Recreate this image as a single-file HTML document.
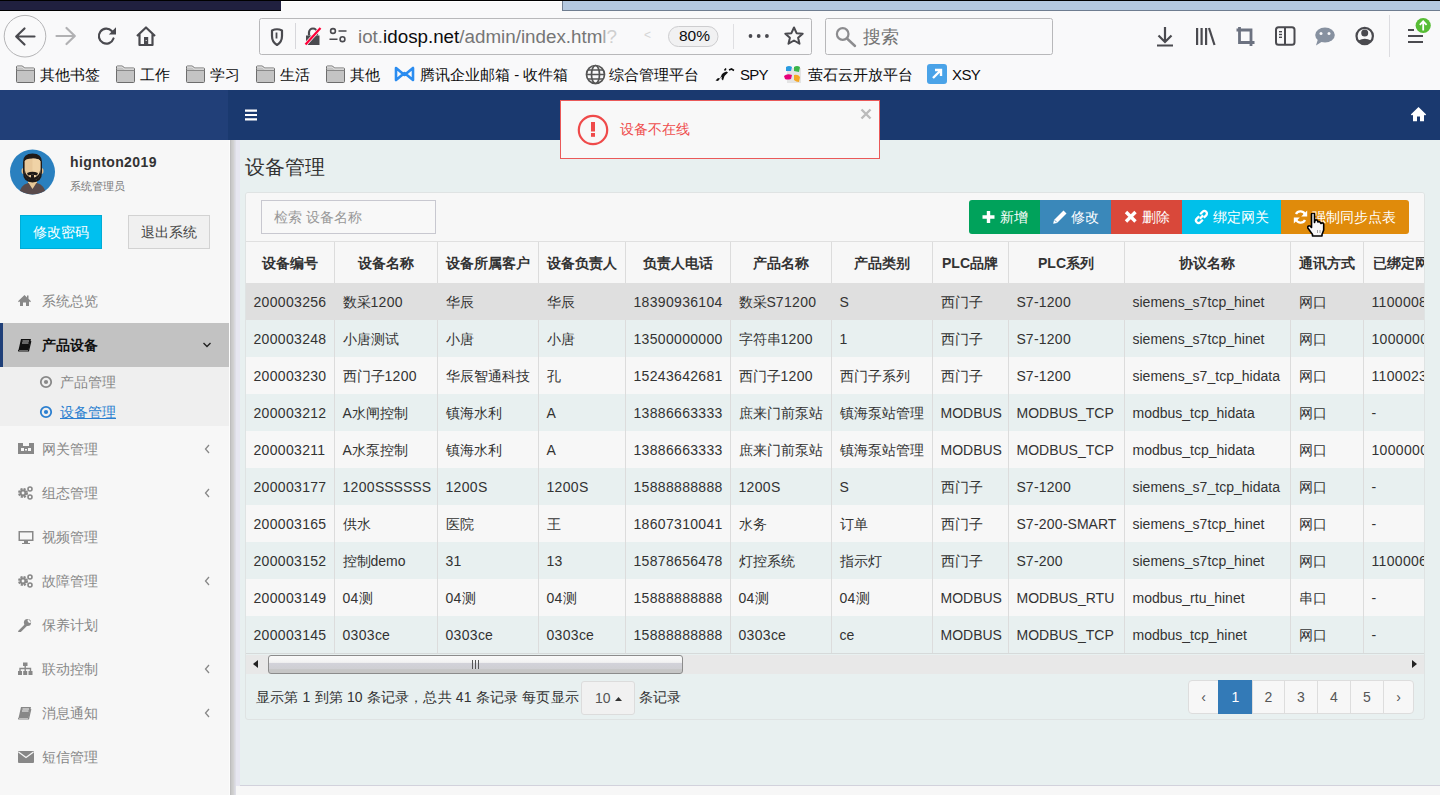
<!DOCTYPE html>
<html><head><meta charset="utf-8">
<style>
*{box-sizing:border-box;margin:0;padding:0}
html,body{width:1440px;height:795px;overflow:hidden;background:#f9f9fa;font-family:"Liberation Sans",sans-serif;color:#333}
.abs{position:absolute}
#strip{position:absolute;left:0;top:0;width:1440px;height:11px;background:#000}
#strip .a{position:absolute;left:0;top:1px;width:281px;height:9px;background:#20203f}
#strip .b{position:absolute;left:281px;top:1px;width:281px;height:10px;background:#f9f9fa;border-top:1px solid #fff}
#strip .c{position:absolute;left:562px;top:1px;width:878px;height:10px;background:#b3c8e0;border-bottom:1px solid #6f7d90;border-left:1px solid #6f7d90}
#toolbar{position:absolute;left:0;top:11px;width:1440px;height:49px;background:#f9f9fa}
#bm{position:absolute;left:0;top:60px;width:1440px;height:30px;background:#f9f9fa;font-size:15px;color:#0c0c0d}
#bm .it{position:absolute;top:0;height:30px;line-height:29px;white-space:nowrap}
#bm svg{position:absolute}
#header{position:absolute;left:0;top:90px;width:1440px;height:50px;background:#1a396f}
#header .logo{position:absolute;left:0;top:0;width:228px;height:50px;background:#213f78}
#sidebar{position:absolute;left:0;top:140px;width:230px;height:655px;background:#f7f7f7}
#sbborder{position:absolute;left:229px;top:140px;width:11px;height:655px;background:linear-gradient(to right,#fcfcfc 0,#fcfcfc 1px,#bdbdbd 1px,#bdbdbd 2px,#c8c8c8 2px,#c8c8c8 3px,#cdcdcd 3px,#cdcdcd 4px,#d2d2d2 4px,#d2d2d2 5px,#d8d8de 5px,#d8d8de 6px,#dedee6 6px,#dedee6 7px,#e6e6f0 7px)}
#content{position:absolute;left:240px;top:140px;width:1200px;height:645px;background:#e8f0f0}
#bottomline{position:absolute;left:240px;top:785px;width:1200px;height:10px;background:#f7f7f7;border-top:1px solid #d2d2dc}
.th{height:41px;line-height:41px;font-size:14px;font-weight:bold;color:#333;text-align:center;white-space:nowrap}
.td{height:37px;line-height:37px;font-size:14px;color:#333;white-space:nowrap}
.ls{letter-spacing:0.32px}
</style></head><body>
<div id="strip"><div class="a"></div><div class="b"></div><div class="c"></div></div>
<div id="toolbar"><svg width="1440" height="49" viewBox="0 11 1440 49" style="position:absolute;left:0;top:0">
<circle cx="25" cy="36.2" r="20.8" fill="none" stroke="#b4b4b6" stroke-width="1"/>
<g fill="none" stroke="#4a4a4f" stroke-width="2.2" stroke-linecap="round" stroke-linejoin="round"><path d="M34.5 36.5H16.5M24.5 28.5L16.2 36.5L24.5 44.5"/></g>
<g fill="none" stroke="#b1b1b3" stroke-width="2.2" stroke-linecap="round" stroke-linejoin="round"><path d="M56.5 36H74.5M66.5 28L74.8 36L66.5 44"/></g>
<g fill="none" stroke="#4a4a4f" stroke-width="2.2" stroke-linecap="round"><path d="M113.5 38.5A7.5 7.5 0 1 1 111.8 31"/></g>
<path d="M116 27.2V34.5H108.8Z" fill="#4a4a4f"/>
<g fill="none" stroke="#4a4a4f" stroke-width="2.2" stroke-linejoin="round"><path d="M137 36L146 27.5L155 36M139.5 34V45H152.5V34"/></g>
<rect x="144" y="37" width="4.2" height="8" fill="#4a4a4f"/>
<rect x="145.7" y="40" width="1" height="1" fill="#f9f9fa"/>
<rect x="259.5" y="18.5" width="552" height="36" rx="2" fill="#f9f9fa" stroke="#b8b8ba"/>
<path d="M272 30.5Q277 28 282 30.5V36Q282 42 277 45Q272 42 272 36Z" fill="none" stroke="#4a4a4f" stroke-width="2.2" stroke-linejoin="round"/>
<path d="M276.5 32.5V38.5" stroke="#4a4a4f" stroke-width="1.8"/>
<line x1="295.5" y1="23" x2="295.5" y2="49" stroke="#d7d7db"/>
<path d="M306 35.5H319.5V45H306Z" fill="#4a4a4f"/>
<path d="M309 35.5V32.5A4 4 0 0 1 317 32.5V35.5" fill="none" stroke="#4a4a4f" stroke-width="2.2"/>
<path d="M305.5 44.5L320.5 28" stroke="#f9f9fa" stroke-width="3.5"/>
<path d="M305.5 44.5L320.5 28" stroke="#ff0039" stroke-width="2.2"/>
<circle cx="333" cy="31" r="2.4" fill="none" stroke="#4a4a4f" stroke-width="1.6"/>
<circle cx="342.5" cy="39.2" r="2.4" fill="none" stroke="#4a4a4f" stroke-width="1.6"/>
<path d="M338.5 31H346.5M329.5 39.2H337.5" stroke="#4a4a4f" stroke-width="1.6"/>
<path d="M668.5 36.5A10 10 0 0 1 678.5 26.5H708A10 10 0 0 1 718 36.5A10 10 0 0 1 708 46.5H678.5A10 10 0 0 1 668.5 36.5Z" fill="#f1f1f2" stroke="#cdcdcf"/>
<line x1="733.5" y1="24" x2="733.5" y2="49" stroke="#dfdfe2"/>
<circle cx="750.5" cy="36" r="1.9" fill="#4a4a4f"/><circle cx="758.7" cy="36" r="1.9" fill="#4a4a4f"/><circle cx="766.9" cy="36" r="1.9" fill="#4a4a4f"/>
<path d="M794 27.5L796.6 33.2L802.7 33.7L798.1 37.7L799.5 43.7L794 40.5L788.5 43.7L789.9 37.7L785.3 33.7L791.4 33.2Z" fill="none" stroke="#4a4a4f" stroke-width="2" stroke-linejoin="round"/>
<rect x="825.5" y="18.5" width="227" height="36" rx="2" fill="#f9f9fa" stroke="#b8b8ba"/>
<circle cx="842.7" cy="34" r="5.8" fill="none" stroke="#8c8c8f" stroke-width="2.2"/>
<path d="M847 38.5L855 46" stroke="#8c8c8f" stroke-width="2.4" stroke-linecap="round"/>
<g fill="none" stroke="#4a4a4f" stroke-width="2.2"><path d="M1165 27V42M1158.5 35.5L1165 42L1171.5 35.5"/></g>
<rect x="1157" y="44.5" width="16" height="2" fill="#4a4a4f"/>
<g fill="#4a4a4f"><rect x="1196" y="28" width="2.2" height="17"/><rect x="1200.5" y="28" width="2.2" height="17"/><rect x="1205" y="28" width="2.2" height="17"/></g>
<path d="M1209 28L1214.5 45" stroke="#4a4a4f" stroke-width="2.2"/>
<g fill="none" stroke="#6c7280" stroke-width="2.8"><path d="M1239.5 27V42.5H1254.5M1236.5 30H1251V46"/></g>
<rect x="1276" y="27.2" width="18.5" height="17.6" rx="2.5" fill="none" stroke="#4a4a4f" stroke-width="2"/>
<line x1="1285" y1="28" x2="1285" y2="44" stroke="#4a4a4f" stroke-width="2"/>
<g fill="#4a4a4f"><rect x="1279" y="31" width="3" height="1.4"/><rect x="1279" y="33.8" width="3" height="1.4"/><rect x="1279" y="36.6" width="3" height="1.4"/></g>
<ellipse cx="1325" cy="35" rx="9.8" ry="7.5" fill="#8791a0"/>
<path d="M1318 39L1316 45.5L1323 41Z" fill="#8791a0"/>
<circle cx="1321" cy="33.5" r="1.5" fill="#f9f9fa"/><circle cx="1329" cy="33.5" r="1.5" fill="#f9f9fa"/>
<circle cx="1364.7" cy="36" r="8.2" fill="none" stroke="#4a4a4f" stroke-width="2.2"/>
<circle cx="1364.7" cy="33" r="3.5" fill="#4a4a4f"/>
<path d="M1358.5 40.5Q1364.7 37 1371 40.5L1369 43Q1364.7 45 1360.5 43Z" fill="#4a4a4f"/>
<line x1="1389.5" y1="15" x2="1389.5" y2="57" stroke="#dcdce0"/>
<g fill="#4a4a4f"><rect x="1408" y="29" width="6" height="2"/><rect x="1408" y="35" width="15" height="2"/><rect x="1408" y="41" width="15" height="2"/></g>
<circle cx="1423.2" cy="25.5" r="7.6" fill="#57bd35"/>
<path d="M1423.2 30.5V21.5M1419.8 24.8L1423.2 21.3L1426.6 24.8" fill="none" stroke="#fff" stroke-width="1.8"/>
</svg>
<div style="position:absolute;left:358px;top:14px;font-size:18.8px;line-height:23px;color:#767676;white-space:nowrap">iot.<span style="color:#0c0c0d">idosp.net</span>/admin/index.htm<span style="color:#a8a8a8">l</span><span style="color:#cfcfcf">?</span></div><div style="position:absolute;left:644px;top:17px;font-size:12px;color:#d5d5d5">&lt;</div>
<div style="position:absolute;left:679px;top:14px;font-size:15.5px;line-height:22px;color:#0c0c0d">80%</div>
<div style="position:absolute;left:863px;top:15px;font-size:18px;line-height:22px;color:#737373">搜索</div>
</div>
<div id="bm"><svg class="abs" style="left:15px;top:5px" width="21" height="18" viewBox="0 0 21 18"><path d="M1.5 3.5V2A1 1 0 0 1 2.5 1H7.5L9.5 3H18.5A1 1 0 0 1 19.5 4V16.5A1 1 0 0 1 18.5 17.5H2.5A1 1 0 0 1 1.5 16.5Z" fill="#c4c4c4" stroke="#6d6d6d" stroke-width="1"/><path d="M1.5 5.5H19.5" stroke="#8a8a8a" stroke-width="1"/><path d="M2 2H7.3L9.2 4H19" stroke="#e6e6e6" stroke-width="1" fill="none"/></svg><div class="it" style="left:40px">其他书签</div><svg class="abs" style="left:115px;top:5px" width="21" height="18" viewBox="0 0 21 18"><path d="M1.5 3.5V2A1 1 0 0 1 2.5 1H7.5L9.5 3H18.5A1 1 0 0 1 19.5 4V16.5A1 1 0 0 1 18.5 17.5H2.5A1 1 0 0 1 1.5 16.5Z" fill="#c4c4c4" stroke="#6d6d6d" stroke-width="1"/><path d="M1.5 5.5H19.5" stroke="#8a8a8a" stroke-width="1"/><path d="M2 2H7.3L9.2 4H19" stroke="#e6e6e6" stroke-width="1" fill="none"/></svg><div class="it" style="left:140px">工作</div><svg class="abs" style="left:185px;top:5px" width="21" height="18" viewBox="0 0 21 18"><path d="M1.5 3.5V2A1 1 0 0 1 2.5 1H7.5L9.5 3H18.5A1 1 0 0 1 19.5 4V16.5A1 1 0 0 1 18.5 17.5H2.5A1 1 0 0 1 1.5 16.5Z" fill="#c4c4c4" stroke="#6d6d6d" stroke-width="1"/><path d="M1.5 5.5H19.5" stroke="#8a8a8a" stroke-width="1"/><path d="M2 2H7.3L9.2 4H19" stroke="#e6e6e6" stroke-width="1" fill="none"/></svg><div class="it" style="left:210px">学习</div><svg class="abs" style="left:255px;top:5px" width="21" height="18" viewBox="0 0 21 18"><path d="M1.5 3.5V2A1 1 0 0 1 2.5 1H7.5L9.5 3H18.5A1 1 0 0 1 19.5 4V16.5A1 1 0 0 1 18.5 17.5H2.5A1 1 0 0 1 1.5 16.5Z" fill="#c4c4c4" stroke="#6d6d6d" stroke-width="1"/><path d="M1.5 5.5H19.5" stroke="#8a8a8a" stroke-width="1"/><path d="M2 2H7.3L9.2 4H19" stroke="#e6e6e6" stroke-width="1" fill="none"/></svg><div class="it" style="left:280px">生活</div><svg class="abs" style="left:325px;top:5px" width="21" height="18" viewBox="0 0 21 18"><path d="M1.5 3.5V2A1 1 0 0 1 2.5 1H7.5L9.5 3H18.5A1 1 0 0 1 19.5 4V16.5A1 1 0 0 1 18.5 17.5H2.5A1 1 0 0 1 1.5 16.5Z" fill="#c4c4c4" stroke="#6d6d6d" stroke-width="1"/><path d="M1.5 5.5H19.5" stroke="#8a8a8a" stroke-width="1"/><path d="M2 2H7.3L9.2 4H19" stroke="#e6e6e6" stroke-width="1" fill="none"/></svg><div class="it" style="left:350px">其他</div><svg class="abs" style="left:394px;top:5px" width="21" height="18" viewBox="0 0 21 18"><path d="M2 3L10.5 10L19 3V15L10.5 8L2 15Z" fill="none" stroke="#2a8cf0" stroke-width="2.6" stroke-linejoin="round"/></svg>
<div class="it" style="left:420px">腾讯企业邮箱 - 收件箱</div>
<svg class="abs" style="left:585px;top:4px" width="21" height="21" viewBox="0 0 21 21"><g fill="none" stroke="#555" stroke-width="1.7"><circle cx="10.5" cy="10.5" r="9"/><ellipse cx="10.5" cy="10.5" rx="4" ry="9"/><path d="M1.5 10.5H19.5M3 6H18M3 15H18"/></g></svg>
<div class="it" style="left:609px">综合管理平台</div>
<svg class="abs" style="left:714px;top:5px" width="22" height="18" viewBox="0 0 22 18"><path d="M1.5 15.5L4 13L6 13.5L8 9L10 7.5L12.5 6.5L14 7.5L12 9.5L10.5 11L9 15.5L7.5 14L8 11.5L6.5 13L4 16Z" fill="#111"/><path d="M10.5 5.5L12 3.5M15 5L17.5 4L20 5.5" fill="none" stroke="#111" stroke-width="1.6"/></svg>
<div class="it" style="left:740px;letter-spacing:-0.8px">SPY</div>
<svg class="abs" style="left:784px;top:5px" width="18" height="19" viewBox="0 0 18 19"><rect x="3" y="3" width="14" height="15" fill="#e4e4e4"/><path d="M2 2Q5 0 8 2L7 6L2 6Z" fill="#2a9be0"/><path d="M10 2Q13 0 16 2L15 7L10 6Z" fill="#3bb54a"/><path d="M0 11Q3 8 8 10L7 14Q3 15 1 14Z" fill="#e6007a"/><path d="M10 10Q14 9 16 12L15 17Q12 17 10 15Z" fill="#f5a623"/></svg>
<div class="it" style="left:808px">萤石云开放平台</div>
<svg class="abs" style="left:927px;top:4px" width="20" height="20" viewBox="0 0 20 20"><rect x="0" y="0" width="20" height="20" rx="3" fill="#4aa3e8"/><path d="M6 14L14 6M8 6H14V12" fill="none" stroke="#fff" stroke-width="2.4"/></svg>
<div class="it" style="left:952px;letter-spacing:-0.6px">XSY</div>
</div>
<div id="header"><div class="logo"></div>
<svg class="abs" style="left:244px;top:19px" width="14" height="12" viewBox="0 0 14 12"><path d="M1 1.6H13M1 6H13M1 10.4H13" stroke="#fff" stroke-width="2.2"/></svg>
<svg class="abs" style="left:1410px;top:16px" width="17" height="16" viewBox="0 0 17 16"><path d="M8.5 1L0.8 8.6L2 9.6L3 8.7V15.2H7V10.5H10V15.2H14V8.7L15 9.6L16.2 8.6Z" fill="#fff"/></svg>
</div>
<div id="sidebar">
<svg class="abs" style="left:10px;top:9px" width="46" height="46" viewBox="0 0 46 46">
<defs><clipPath id="cc"><circle cx="22.5" cy="23" r="22.5"/></clipPath></defs>
<circle cx="22.5" cy="23" r="22.5" fill="#2a80bf"/>
<g clip-path="url(#cc)">
<path d="M9 46Q10 36 18 34H27Q35 36 36 46Z" fill="#594a4b"/>
<path d="M18 33H27L22.5 40Z" fill="#e6c797"/>
<rect x="18" y="29" width="9" height="5" fill="#e6c797"/>
<ellipse cx="13.5" cy="22" rx="2" ry="3" fill="#e0b988"/><ellipse cx="31.5" cy="22" rx="2" ry="3" fill="#e0b988"/>
<path d="M13 13Q13 4.5 22.5 4.5Q32 4.5 32 13V23Q32 33.5 22.5 33.5Q13 33.5 13 23Z" fill="#1f1a18"/>
<path d="M14.6 12.5Q15 9.5 22.5 9.5Q30 9.5 30.4 12.5V22Q30.4 31 22.5 31Q14.6 31 14.6 22Z" fill="#e8c89a"/>
<path d="M22.5 9.5Q30 9.5 30.4 12.5V22Q30.4 31 22.5 31Z" fill="#f0d3a6"/>
<path d="M17 24Q22.5 21.5 28 24L27 26.5Q22.5 25 18 26.5Z" fill="#1f1a18"/>
<path d="M21 26H24V31H21Z" fill="#1f1a18"/>
<path d="M14.6 20Q15.5 28 22.5 29Q29.5 28 30.4 20V25Q29 31.5 22.5 31.5Q16 31.5 14.6 25Z" fill="#1f1a18"/>
</g></svg>
<div class="abs" style="left:70px;top:13px;font-size:14px;font-weight:bold;color:#333;line-height:18px;letter-spacing:0.4px">hignton2019</div>
<div class="abs" style="left:70px;top:38px;font-size:11px;color:#777;line-height:16px">系统管理员</div>
<div class="abs" style="left:20px;top:75px;width:82px;height:34px;background:#00c0ef;border:1px solid #00acd6;color:#fff;font-size:14px;line-height:32px;text-align:center">修改密码</div>
<div class="abs" style="left:128px;top:75px;width:82px;height:34px;background:#f0f0f0;border:1px solid #d2d2d2;color:#444;font-size:14px;line-height:32px;text-align:center">退出系统</div>
<div class="abs" style="left:0;top:183px;width:230px;height:44px;background:#c2c2c2;border-left:3px solid #1f3f78"></div>
<div class="abs" style="left:0;top:227px;width:230px;height:59px;background:#efefef"></div>
<svg class="abs" style="left:18px;top:154px" width="16" height="14" viewBox="0 0 16 14"><path d="M6.5 1L0 7.2L1 8.2L2 7.3V12H5V8.5H8V12H11V7.3L12 8.2L13 7.2L10.5 4.8V1.5H9V3.4Z" fill="#888"/></svg><div class="abs" style="left:42px;top:151px;font-size:14px;line-height:20px;color:#888;white-space:nowrap">系统总览</div><svg class="abs" style="left:18px;top:198px" width="16" height="14" viewBox="0 0 16 14"><path d="M3 1H13L10.5 12H0.5Z" fill="#111"/><path d="M4.5 3H11M4 5H10.5" stroke="#c2c2c2" stroke-width="1"/><path d="M0.5 12Q0 13 1.5 13H10.5L12.8 3" fill="none" stroke="#111" stroke-width="1.2"/></svg><div class="abs" style="left:42px;top:195px;font-size:14px;line-height:20px;color:#111;white-space:nowrap;font-weight:bold">产品设备</div><svg class="abs" style="left:202px;top:201px" width="10" height="8" viewBox="0 0 10 8"><path d="M1.5 2L5 5.5L8.5 2" fill="none" stroke="#222" stroke-width="1.4"/></svg><svg class="abs" style="left:39px;top:235px" width="14" height="14" viewBox="0 0 14 14"><circle cx="7" cy="7" r="5.2" fill="none" stroke="#888" stroke-width="1.8"/><circle cx="7" cy="7" r="2.1" fill="#888"/></svg><div class="abs" style="left:60px;top:232px;font-size:14px;line-height:20px;color:#888;white-space:nowrap">产品管理</div><svg class="abs" style="left:39px;top:265px" width="14" height="14" viewBox="0 0 14 14"><circle cx="7" cy="7" r="5.2" fill="none" stroke="#2b7fd0" stroke-width="1.8"/><circle cx="7" cy="7" r="2.1" fill="#2b7fd0"/></svg><div class="abs" style="left:60px;top:262px;font-size:14px;line-height:20px;color:#2b7fd0;text-decoration:underline;white-space:nowrap">设备管理</div><svg class="abs" style="left:18px;top:302px" width="16" height="14" viewBox="0 0 16 14"><path d="M0 1H5V4H11V1H16V12H0Z" fill="#888"/><rect x="3" y="6" width="3" height="3" fill="#f7f7f7"/><rect x="10" y="6" width="3" height="3" fill="#f7f7f7"/><rect x="7" y="7" width="2" height="1.5" fill="#f7f7f7"/></svg><div class="abs" style="left:42px;top:299px;font-size:14px;line-height:20px;color:#888;white-space:nowrap">网关管理</div><svg class="abs" style="left:203px;top:304px" width="8" height="10" viewBox="0 0 8 10"><path d="M6 1L2.5 5L6 9" fill="none" stroke="#888" stroke-width="1.3"/></svg><svg class="abs" style="left:18px;top:346px" width="16" height="14" viewBox="0 0 16 14"><circle cx="5" cy="7" r="3.8" fill="none" stroke="#888" stroke-width="2.4" stroke-dasharray="2 1"/><circle cx="5" cy="7" r="2.4" fill="none" stroke="#888" stroke-width="2"/><circle cx="12" cy="3" r="2" fill="none" stroke="#888" stroke-width="1.6"/><circle cx="12" cy="11" r="2" fill="none" stroke="#888" stroke-width="1.6"/></svg><div class="abs" style="left:42px;top:343px;font-size:14px;line-height:20px;color:#888;white-space:nowrap">组态管理</div><svg class="abs" style="left:203px;top:348px" width="8" height="10" viewBox="0 0 8 10"><path d="M6 1L2.5 5L6 9" fill="none" stroke="#888" stroke-width="1.3"/></svg><svg class="abs" style="left:18px;top:390px" width="16" height="14" viewBox="0 0 16 14"><rect x="0.5" y="1" width="15" height="10" fill="#888"/><rect x="2" y="2.5" width="12" height="7" fill="#f7f7f7"/><rect x="6" y="11" width="4" height="2" fill="#888"/><rect x="4" y="13" width="8" height="1" fill="#888"/></svg><div class="abs" style="left:42px;top:387px;font-size:14px;line-height:20px;color:#888;white-space:nowrap">视频管理</div><svg class="abs" style="left:18px;top:434px" width="16" height="14" viewBox="0 0 16 14"><circle cx="5" cy="7" r="3.8" fill="none" stroke="#888" stroke-width="2.4" stroke-dasharray="2 1"/><circle cx="5" cy="7" r="2.4" fill="none" stroke="#888" stroke-width="2"/><circle cx="12" cy="3" r="2" fill="none" stroke="#888" stroke-width="1.6"/><circle cx="12" cy="11" r="2" fill="none" stroke="#888" stroke-width="1.6"/></svg><div class="abs" style="left:42px;top:431px;font-size:14px;line-height:20px;color:#888;white-space:nowrap">故障管理</div><svg class="abs" style="left:203px;top:436px" width="8" height="10" viewBox="0 0 8 10"><path d="M6 1L2.5 5L6 9" fill="none" stroke="#888" stroke-width="1.3"/></svg><svg class="abs" style="left:18px;top:478px" width="16" height="14" viewBox="0 0 16 14"><path d="M1.5 13.5L8 7" stroke="#888" stroke-width="2.6" stroke-linecap="round"/><circle cx="9.5" cy="4.5" r="3.6" fill="#888"/><path d="M10 1L13.5 4.5L11 5L9.5 3Z" fill="#f7f7f7"/></svg><div class="abs" style="left:42px;top:475px;font-size:14px;line-height:20px;color:#888;white-space:nowrap">保养计划</div><svg class="abs" style="left:18px;top:522px" width="16" height="14" viewBox="0 0 16 14"><rect x="5" y="0.5" width="4.5" height="3.5" fill="#888"/><path d="M7.2 4V6.5M2 9V6.5H12.5V9M7.2 6.5V9" stroke="#888" stroke-width="1.4" fill="none"/><rect x="0" y="9" width="4" height="4" fill="#888"/><rect x="5.2" y="9" width="4" height="4" fill="#888"/><rect x="10.5" y="9" width="4" height="4" fill="#888"/></svg><div class="abs" style="left:42px;top:519px;font-size:14px;line-height:20px;color:#888;white-space:nowrap">联动控制</div><svg class="abs" style="left:203px;top:524px" width="8" height="10" viewBox="0 0 8 10"><path d="M6 1L2.5 5L6 9" fill="none" stroke="#888" stroke-width="1.3"/></svg><svg class="abs" style="left:18px;top:566px" width="16" height="14" viewBox="0 0 16 14"><path d="M3 1H13L10.5 12H0.5Z" fill="#888"/><path d="M4.5 3H11M4 5H10.5" stroke="#f7f7f7" stroke-width="1"/><path d="M0.5 12Q0 13 1.5 13H10.5L12.8 3" fill="none" stroke="#888" stroke-width="1.2"/></svg><div class="abs" style="left:42px;top:563px;font-size:14px;line-height:20px;color:#888;white-space:nowrap">消息通知</div><svg class="abs" style="left:203px;top:568px" width="8" height="10" viewBox="0 0 8 10"><path d="M6 1L2.5 5L6 9" fill="none" stroke="#888" stroke-width="1.3"/></svg><svg class="abs" style="left:18px;top:610px" width="16" height="14" viewBox="0 0 16 14"><rect x="0" y="1" width="16" height="12" rx="1" fill="#888"/><path d="M0.5 2L8 7.5L15.5 2" fill="none" stroke="#f7f7f7" stroke-width="1.3"/></svg><div class="abs" style="left:42px;top:607px;font-size:14px;line-height:20px;color:#888;white-space:nowrap">短信管理</div>
</div>
<div id="sbborder"></div>
<div id="content"></div>
<div id="title" class="abs" style="left:245px;top:154px;font-size:20px;line-height:26px;color:#333">设备管理</div>
<div id="panel" class="abs" style="left:245px;top:192px;width:1180px;height:528px;border:1px solid #dfe3e3;border-radius:3px;background:#e8f0f0;overflow:hidden">
<div class="abs" style="left:0;top:0;width:1180px;height:49px;background:#f7f7f7;border-bottom:1px solid #e0e0e0"></div>
<div class="abs" style="left:15px;top:7px;width:175px;height:34px;border:1px solid #c8c8d0;background:#f8f8f8;color:#999;font-size:14px;line-height:32px;padding-left:12px">检索 设备名称</div>
<div class="abs" style="left:723px;top:7px;width:71px;height:34px;background:#00a25b;border-radius:3px 0 0 3px;"></div>
<svg class="abs" style="left:735px;top:16px" width="16" height="16" viewBox="0 0 16 16"><path d="M7.5 2V14M1.5 8H13.5" stroke="#fff" stroke-width="3.4"/></svg>
<div class="abs" style="left:754px;top:7px;height:34px;line-height:34px;font-size:14px;color:#fff;white-space:nowrap">新增</div>
<div class="abs" style="left:794px;top:7px;width:71px;height:34px;background:#3a88ba;"></div>
<svg class="abs" style="left:806px;top:16px" width="16" height="16" viewBox="0 0 16 16"><path d="M1.2 14.8L2 11L11.5 1.5L14.5 4.5L5 14Z" fill="#fff"/><path d="M2.6 11.2L4.8 13.4" stroke="#3a88ba" stroke-width="0.8"/></svg>
<div class="abs" style="left:825px;top:7px;height:34px;line-height:34px;font-size:14px;color:#fff;white-space:nowrap">修改</div>
<div class="abs" style="left:865px;top:7px;width:71px;height:34px;background:#d9483a;"></div>
<svg class="abs" style="left:877px;top:16px" width="16" height="16" viewBox="0 0 16 16"><path d="M3 3L12.5 12.5M12.5 3L3 12.5" stroke="#fff" stroke-width="3.4"/></svg>
<div class="abs" style="left:896px;top:7px;height:34px;line-height:34px;font-size:14px;color:#fff;white-space:nowrap">删除</div>
<div class="abs" style="left:936px;top:7px;width:99px;height:34px;background:#00c0ea;"></div>
<svg class="abs" style="left:948px;top:16px" width="16" height="16" viewBox="0 0 16 16"><g fill="none" stroke="#fff" stroke-width="2.3"><path d="M6.2 5.2L8.6 2.8A2.4 2.4 0 0 1 12.2 6.4L9.8 8.8"/><path d="M8.8 10.8L6.4 13.2A2.4 2.4 0 0 1 2.8 9.6L5.2 7.2"/><path d="M5.8 9.8L9.2 6.4"/></g></svg>
<div class="abs" style="left:967px;top:7px;height:34px;line-height:34px;font-size:14px;color:#fff;white-space:nowrap">绑定网关</div>
<div class="abs" style="left:1035px;top:7px;width:128px;height:34px;background:#e08b0b;border-radius:0 3px 3px 0;"></div>
<svg class="abs" style="left:1047px;top:16px" width="16" height="16" viewBox="0 0 16 16"><path d="M12.2 6A5 5 0 0 0 3 5M2.8 10A5 5 0 0 0 12 11" fill="none" stroke="#fff" stroke-width="2.4"/><path d="M14.2 1.5V7.5H8.2Z" fill="#fff"/><path d="M0.8 14.5V8.5H6.8Z" fill="#fff"/></svg>
<div class="abs" style="left:1066px;top:7px;height:34px;line-height:34px;font-size:14px;color:#fff;white-space:nowrap">强制同步点表</div>
<div class="abs" style="left:0;top:49px;width:1180px;height:41px;background:#f7f7f7"></div>
<div class="abs" style="left:0;top:90px;width:1180px;height:37px;background:#dfdfdf"></div>
<div class="abs" style="left:0;top:127px;width:1180px;height:37px;background:#e8f0f0"></div>
<div class="abs" style="left:0;top:164px;width:1180px;height:37px;background:#f7f7f7"></div>
<div class="abs" style="left:0;top:201px;width:1180px;height:37px;background:#e8f0f0"></div>
<div class="abs" style="left:0;top:238px;width:1180px;height:37px;background:#f7f7f7"></div>
<div class="abs" style="left:0;top:275px;width:1180px;height:37px;background:#e8f0f0"></div>
<div class="abs" style="left:0;top:312px;width:1180px;height:37px;background:#f7f7f7"></div>
<div class="abs" style="left:0;top:349px;width:1180px;height:37px;background:#e8f0f0"></div>
<div class="abs" style="left:0;top:386px;width:1180px;height:37px;background:#f7f7f7"></div>
<div class="abs" style="left:0;top:423px;width:1180px;height:37px;background:#e8f0f0"></div>
<div class="abs" style="left:-1px;top:49px;width:1px;height:41px;background:#dcdcdc"></div>
<div class="abs" style="left:-1px;top:127px;width:1px;height:333px;background:#dcdcdc"></div>
<div class="abs" style="left:88px;top:49px;width:1px;height:41px;background:#dcdcdc"></div>
<div class="abs" style="left:88px;top:127px;width:1px;height:333px;background:#dcdcdc"></div>
<div class="abs" style="left:191px;top:49px;width:1px;height:41px;background:#dcdcdc"></div>
<div class="abs" style="left:191px;top:127px;width:1px;height:333px;background:#dcdcdc"></div>
<div class="abs" style="left:292px;top:49px;width:1px;height:41px;background:#dcdcdc"></div>
<div class="abs" style="left:292px;top:127px;width:1px;height:333px;background:#dcdcdc"></div>
<div class="abs" style="left:379px;top:49px;width:1px;height:41px;background:#dcdcdc"></div>
<div class="abs" style="left:379px;top:127px;width:1px;height:333px;background:#dcdcdc"></div>
<div class="abs" style="left:484px;top:49px;width:1px;height:41px;background:#dcdcdc"></div>
<div class="abs" style="left:484px;top:127px;width:1px;height:333px;background:#dcdcdc"></div>
<div class="abs" style="left:585px;top:49px;width:1px;height:41px;background:#dcdcdc"></div>
<div class="abs" style="left:585px;top:127px;width:1px;height:333px;background:#dcdcdc"></div>
<div class="abs" style="left:686px;top:49px;width:1px;height:41px;background:#dcdcdc"></div>
<div class="abs" style="left:686px;top:127px;width:1px;height:333px;background:#dcdcdc"></div>
<div class="abs" style="left:762px;top:49px;width:1px;height:41px;background:#dcdcdc"></div>
<div class="abs" style="left:762px;top:127px;width:1px;height:333px;background:#dcdcdc"></div>
<div class="abs" style="left:878px;top:49px;width:1px;height:41px;background:#dcdcdc"></div>
<div class="abs" style="left:878px;top:127px;width:1px;height:333px;background:#dcdcdc"></div>
<div class="abs" style="left:1044px;top:49px;width:1px;height:41px;background:#dcdcdc"></div>
<div class="abs" style="left:1044px;top:127px;width:1px;height:333px;background:#dcdcdc"></div>
<div class="abs" style="left:1117px;top:49px;width:1px;height:41px;background:#dcdcdc"></div>
<div class="abs" style="left:1117px;top:127px;width:1px;height:333px;background:#dcdcdc"></div>
<div class="abs th" style="left:-1px;top:50px;width:89px">设备编号</div>
<div class="abs th" style="left:88px;top:50px;width:103px">设备名称</div>
<div class="abs th" style="left:191px;top:50px;width:101px">设备所属客户</div>
<div class="abs th" style="left:292px;top:50px;width:87px">设备负责人</div>
<div class="abs th" style="left:379px;top:50px;width:105px">负责人电话</div>
<div class="abs th" style="left:484px;top:50px;width:101px">产品名称</div>
<div class="abs th" style="left:585px;top:50px;width:101px">产品类别</div>
<div class="abs th" style="left:686px;top:50px;width:76px">PLC品牌</div>
<div class="abs th" style="left:762px;top:50px;width:116px">PLC系列</div>
<div class="abs th" style="left:878px;top:50px;width:166px">协议名称</div>
<div class="abs th" style="left:1044px;top:50px;width:73px">通讯方式</div>
<div class="abs th" style="left:1127px;top:50px">已绑定网关</div>
<div class="abs td" style="left:7.5px;top:91px"><span class="ls">200003256</span></div>
<div class="abs td" style="left:96.5px;top:91px">数采<span class="ls">1200</span></div>
<div class="abs td" style="left:199.5px;top:91px">华辰</div>
<div class="abs td" style="left:300.5px;top:91px">华辰</div>
<div class="abs td" style="left:387.5px;top:91px"><span class="ls">18390936104</span></div>
<div class="abs td" style="left:492.5px;top:91px">数采S<span class="ls">71200</span></div>
<div class="abs td" style="left:593.5px;top:91px">S</div>
<div class="abs td" style="left:694.5px;top:91px">西门子</div>
<div class="abs td" style="left:770.5px;top:91px">S<span class="ls">7</span>-<span class="ls">1200</span></div>
<div class="abs td" style="left:886.5px;top:91px">siemens_s<span class="ls">7</span>tcp_hinet</div>
<div class="abs td" style="left:1052.5px;top:91px">网口</div>
<div class="abs td" style="left:1125.5px;top:91px"><span class="ls">1100008</span></div>
<div class="abs td" style="left:7.5px;top:128px"><span class="ls">200003248</span></div>
<div class="abs td" style="left:96.5px;top:128px">小唐测试</div>
<div class="abs td" style="left:199.5px;top:128px">小唐</div>
<div class="abs td" style="left:300.5px;top:128px">小唐</div>
<div class="abs td" style="left:387.5px;top:128px"><span class="ls">13500000000</span></div>
<div class="abs td" style="left:492.5px;top:128px">字符串<span class="ls">1200</span></div>
<div class="abs td" style="left:593.5px;top:128px"><span class="ls">1</span></div>
<div class="abs td" style="left:694.5px;top:128px">西门子</div>
<div class="abs td" style="left:770.5px;top:128px">S<span class="ls">7</span>-<span class="ls">1200</span></div>
<div class="abs td" style="left:886.5px;top:128px">siemens_s<span class="ls">7</span>tcp_hinet</div>
<div class="abs td" style="left:1052.5px;top:128px">网口</div>
<div class="abs td" style="left:1125.5px;top:128px"><span class="ls">1000000</span></div>
<div class="abs td" style="left:7.5px;top:165px"><span class="ls">200003230</span></div>
<div class="abs td" style="left:96.5px;top:165px">西门子<span class="ls">1200</span></div>
<div class="abs td" style="left:199.5px;top:165px">华辰智通科技</div>
<div class="abs td" style="left:300.5px;top:165px">孔</div>
<div class="abs td" style="left:387.5px;top:165px"><span class="ls">15243642681</span></div>
<div class="abs td" style="left:492.5px;top:165px">西门子<span class="ls">1200</span></div>
<div class="abs td" style="left:593.5px;top:165px">西门子系列</div>
<div class="abs td" style="left:694.5px;top:165px">西门子</div>
<div class="abs td" style="left:770.5px;top:165px">S<span class="ls">7</span>-<span class="ls">1200</span></div>
<div class="abs td" style="left:886.5px;top:165px">siemens_s<span class="ls">7</span>_tcp_hidata</div>
<div class="abs td" style="left:1052.5px;top:165px">网口</div>
<div class="abs td" style="left:1125.5px;top:165px"><span class="ls">1100023</span></div>
<div class="abs td" style="left:7.5px;top:202px"><span class="ls">200003212</span></div>
<div class="abs td" style="left:96.5px;top:202px">A水闸控制</div>
<div class="abs td" style="left:199.5px;top:202px">镇海水利</div>
<div class="abs td" style="left:300.5px;top:202px">A</div>
<div class="abs td" style="left:387.5px;top:202px"><span class="ls">13886663333</span></div>
<div class="abs td" style="left:492.5px;top:202px">庶来门前泵站</div>
<div class="abs td" style="left:593.5px;top:202px">镇海泵站管理</div>
<div class="abs td" style="left:694.5px;top:202px">MODBUS</div>
<div class="abs td" style="left:770.5px;top:202px">MODBUS_TCP</div>
<div class="abs td" style="left:886.5px;top:202px">modbus_tcp_hidata</div>
<div class="abs td" style="left:1052.5px;top:202px">网口</div>
<div class="abs td" style="left:1125.5px;top:202px">-</div>
<div class="abs td" style="left:7.5px;top:239px"><span class="ls">200003211</span></div>
<div class="abs td" style="left:96.5px;top:239px">A水泵控制</div>
<div class="abs td" style="left:199.5px;top:239px">镇海水利</div>
<div class="abs td" style="left:300.5px;top:239px">A</div>
<div class="abs td" style="left:387.5px;top:239px"><span class="ls">13886663333</span></div>
<div class="abs td" style="left:492.5px;top:239px">庶来门前泵站</div>
<div class="abs td" style="left:593.5px;top:239px">镇海泵站管理</div>
<div class="abs td" style="left:694.5px;top:239px">MODBUS</div>
<div class="abs td" style="left:770.5px;top:239px">MODBUS_TCP</div>
<div class="abs td" style="left:886.5px;top:239px">modbus_tcp_hidata</div>
<div class="abs td" style="left:1052.5px;top:239px">网口</div>
<div class="abs td" style="left:1125.5px;top:239px"><span class="ls">1000000</span></div>
<div class="abs td" style="left:7.5px;top:276px"><span class="ls">200003177</span></div>
<div class="abs td" style="left:96.5px;top:276px"><span class="ls">1200</span>SSSSSS</div>
<div class="abs td" style="left:199.5px;top:276px"><span class="ls">1200</span>S</div>
<div class="abs td" style="left:300.5px;top:276px"><span class="ls">1200</span>S</div>
<div class="abs td" style="left:387.5px;top:276px"><span class="ls">15888888888</span></div>
<div class="abs td" style="left:492.5px;top:276px"><span class="ls">1200</span>S</div>
<div class="abs td" style="left:593.5px;top:276px">S</div>
<div class="abs td" style="left:694.5px;top:276px">西门子</div>
<div class="abs td" style="left:770.5px;top:276px">S<span class="ls">7</span>-<span class="ls">1200</span></div>
<div class="abs td" style="left:886.5px;top:276px">siemens_s<span class="ls">7</span>_tcp_hidata</div>
<div class="abs td" style="left:1052.5px;top:276px">网口</div>
<div class="abs td" style="left:1125.5px;top:276px">-</div>
<div class="abs td" style="left:7.5px;top:313px"><span class="ls">200003165</span></div>
<div class="abs td" style="left:96.5px;top:313px">供水</div>
<div class="abs td" style="left:199.5px;top:313px">医院</div>
<div class="abs td" style="left:300.5px;top:313px">王</div>
<div class="abs td" style="left:387.5px;top:313px"><span class="ls">18607310041</span></div>
<div class="abs td" style="left:492.5px;top:313px">水务</div>
<div class="abs td" style="left:593.5px;top:313px">订单</div>
<div class="abs td" style="left:694.5px;top:313px">西门子</div>
<div class="abs td" style="left:770.5px;top:313px">S<span class="ls">7</span>-<span class="ls">200</span>-SMART</div>
<div class="abs td" style="left:886.5px;top:313px">siemens_s<span class="ls">7</span>tcp_hinet</div>
<div class="abs td" style="left:1052.5px;top:313px">网口</div>
<div class="abs td" style="left:1125.5px;top:313px">-</div>
<div class="abs td" style="left:7.5px;top:350px"><span class="ls">200003152</span></div>
<div class="abs td" style="left:96.5px;top:350px">控制demo</div>
<div class="abs td" style="left:199.5px;top:350px"><span class="ls">31</span></div>
<div class="abs td" style="left:300.5px;top:350px"><span class="ls">13</span></div>
<div class="abs td" style="left:387.5px;top:350px"><span class="ls">15878656478</span></div>
<div class="abs td" style="left:492.5px;top:350px">灯控系统</div>
<div class="abs td" style="left:593.5px;top:350px">指示灯</div>
<div class="abs td" style="left:694.5px;top:350px">西门子</div>
<div class="abs td" style="left:770.5px;top:350px">S<span class="ls">7</span>-<span class="ls">200</span></div>
<div class="abs td" style="left:886.5px;top:350px">siemens_s<span class="ls">7</span>tcp_hinet</div>
<div class="abs td" style="left:1052.5px;top:350px">网口</div>
<div class="abs td" style="left:1125.5px;top:350px"><span class="ls">1100006</span></div>
<div class="abs td" style="left:7.5px;top:387px"><span class="ls">200003149</span></div>
<div class="abs td" style="left:96.5px;top:387px"><span class="ls">04</span>测</div>
<div class="abs td" style="left:199.5px;top:387px"><span class="ls">04</span>测</div>
<div class="abs td" style="left:300.5px;top:387px"><span class="ls">04</span>测</div>
<div class="abs td" style="left:387.5px;top:387px"><span class="ls">15888888888</span></div>
<div class="abs td" style="left:492.5px;top:387px"><span class="ls">04</span>测</div>
<div class="abs td" style="left:593.5px;top:387px"><span class="ls">04</span>测</div>
<div class="abs td" style="left:694.5px;top:387px">MODBUS</div>
<div class="abs td" style="left:770.5px;top:387px">MODBUS_RTU</div>
<div class="abs td" style="left:886.5px;top:387px">modbus_rtu_hinet</div>
<div class="abs td" style="left:1052.5px;top:387px">串口</div>
<div class="abs td" style="left:1125.5px;top:387px">-</div>
<div class="abs td" style="left:7.5px;top:424px"><span class="ls">200003145</span></div>
<div class="abs td" style="left:96.5px;top:424px"><span class="ls">0303</span>ce</div>
<div class="abs td" style="left:199.5px;top:424px"><span class="ls">0303</span>ce</div>
<div class="abs td" style="left:300.5px;top:424px"><span class="ls">0303</span>ce</div>
<div class="abs td" style="left:387.5px;top:424px"><span class="ls">15888888888</span></div>
<div class="abs td" style="left:492.5px;top:424px"><span class="ls">0303</span>ce</div>
<div class="abs td" style="left:593.5px;top:424px">ce</div>
<div class="abs td" style="left:694.5px;top:424px">MODBUS</div>
<div class="abs td" style="left:770.5px;top:424px">MODBUS_TCP</div>
<div class="abs td" style="left:886.5px;top:424px">modbus_tcp_hinet</div>
<div class="abs td" style="left:1052.5px;top:424px">网口</div>
<div class="abs td" style="left:1125.5px;top:424px">-</div>
<div class="abs" style="left:0;top:462px;width:1180px;height:19px;background:#e8e8e8"></div>
<svg class="abs" style="left:5px;top:466px" width="10" height="10" viewBox="0 0 10 10"><path d="M7 1V9L2 5Z" fill="#222"/></svg>
<svg class="abs" style="left:1163px;top:466px" width="10" height="10" viewBox="0 0 10 10"><path d="M3 1V9L8 5Z" fill="#222"/></svg>
<div class="abs" style="left:0;top:460px;width:1180px;height:1px;background:#d6dada"></div>
<div class="abs" style="left:22px;top:462px;width:415px;height:19px;border:1px solid #8c8c8c;border-radius:3px;background:linear-gradient(#fafafa,#f2f2f2 38%,#d2d2da 40%,#cfcfd3 75%,#c6c6c6 80%,#c6c6c6)"></div>
<svg class="abs" style="left:225px;top:467px" width="9" height="9" viewBox="0 0 9 9"><path d="M1.5 0V9M4.5 0V9M7.5 0V9" stroke="#555" stroke-width="1"/></svg>
<div class="abs" style="left:10px;top:495px;font-size:14px;letter-spacing:0.16px;line-height:18px;color:#333;white-space:nowrap">显示第 1 到第 10 条记录，总共 41 条记录 每页显示</div>
<div class="abs" style="left:335px;top:488px;width:54px;height:34px;border:1px solid #dcdcdc;border-radius:3px;background:#f1f1f1;font-size:14px;line-height:32px;color:#555;padding-left:13px">10</div>
<svg class="abs" style="left:369px;top:504px" width="7" height="4" viewBox="0 0 7 4"><path d="M0 4L3.5 0L7 4Z" fill="#333"/></svg>
<div class="abs" style="left:393px;top:495px;font-size:14px;line-height:18px;color:#333;white-space:nowrap">条记录</div>
<div class="abs" style="left:942px;top:487px;width:31px;height:34px;border:1px solid #dddddd;background:#f7f7f7;color:#555;border-radius:4px 0 0 4px;font-size:14px;line-height:32px;text-align:center">‹</div>
<div class="abs" style="left:972px;top:487px;width:35px;height:34px;border:1px solid #337ab7;background:#337ab7;color:#fff;font-size:14px;line-height:32px;text-align:center">1</div>
<div class="abs" style="left:1006px;top:487px;width:33px;height:34px;border:1px solid #dddddd;background:#f7f7f7;color:#555;font-size:14px;line-height:32px;text-align:center">2</div>
<div class="abs" style="left:1038px;top:487px;width:34px;height:34px;border:1px solid #dddddd;background:#f7f7f7;color:#555;font-size:14px;line-height:32px;text-align:center">3</div>
<div class="abs" style="left:1071px;top:487px;width:34px;height:34px;border:1px solid #dddddd;background:#f7f7f7;color:#555;font-size:14px;line-height:32px;text-align:center">4</div>
<div class="abs" style="left:1104px;top:487px;width:34px;height:34px;border:1px solid #dddddd;background:#f7f7f7;color:#555;font-size:14px;line-height:32px;text-align:center">5</div>
<div class="abs" style="left:1137px;top:487px;width:31px;height:34px;border:1px solid #dddddd;background:#f7f7f7;color:#555;border-radius:0 4px 4px 0;font-size:14px;line-height:32px;text-align:center">›</div>
</div>
<div id="bottomline"></div><div id="bfix" style="position:absolute;left:236px;top:786px;width:4px;height:9px;background:#f7f7f7"></div>
<div id="toast" class="abs" style="left:560px;top:100px;width:320px;height:59px;border:1px solid #ea5959;background:#f8f8f8">
<svg class="abs" style="left:16px;top:13px" width="32" height="32" viewBox="0 0 32 32"><circle cx="16" cy="16" r="14.2" fill="none" stroke="#ef4a4a" stroke-width="2.2"/><rect x="14" y="8" width="4" height="9.5" fill="#ef4a4a"/><rect x="14" y="19" width="4" height="3.8" fill="#ef4a4a"/></svg>
<div class="abs" style="left:59px;top:18px;font-size:14px;line-height:20px;color:#ef4f4f;white-space:nowrap">设备不在线</div>
<svg class="abs" style="left:299px;top:7px" width="12" height="12" viewBox="0 0 12 12"><path d="M1.5 1.5L10.5 10.5M10.5 1.5L1.5 10.5" stroke="#bbb" stroke-width="2.4"/></svg>
</div>
<svg class="abs" style="left:1307px;top:213px" width="19" height="24" viewBox="0 0 19 24"><path d="M4.5 1.5A1.5 1.5 0 0 1 7.5 1.5V9.5L8 7.5A1.5 1.5 0 0 1 10.7 8.5L11 9A1.5 1.5 0 0 1 13.5 9.8L14 10.5A1.5 1.5 0 0 1 16.7 11.5V17L15 21.5V23H5.5V21.5L1.2 15.5A1.5 1.5 0 0 1 3.2 13.2L4.5 14.5Z" fill="#f8f8f8" stroke="#000" stroke-width="1.6" stroke-linejoin="round"/><path d="M10.5 17V20M13 17V20" stroke="#888" stroke-width="0.8"/></svg>
</body></html>
